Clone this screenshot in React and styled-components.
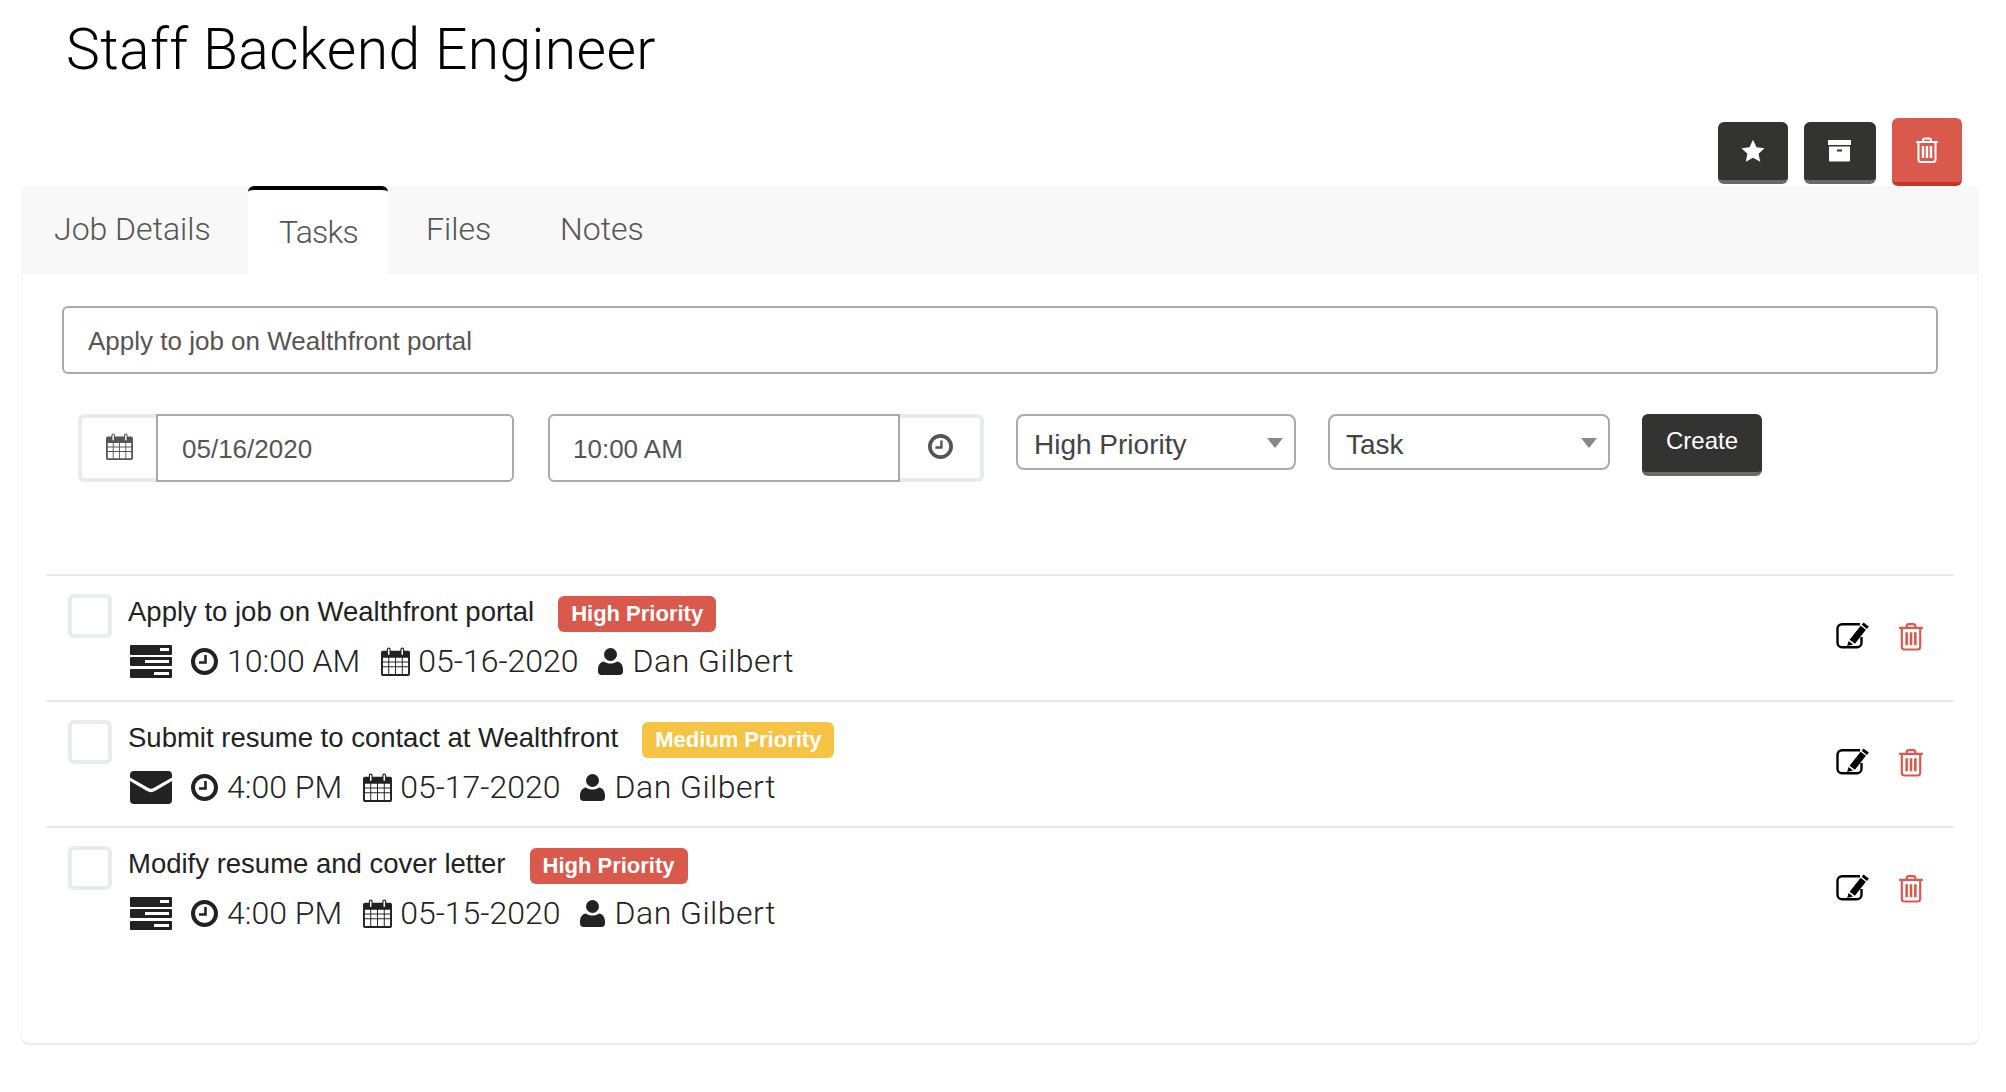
import React from "react";
import styled, { createGlobalStyle } from "styled-components";

const Global = createGlobalStyle`
  html, body { margin: 0; padding: 0; background: #fff; }
  body { font-family: "Liberation Sans", Arial, sans-serif; color: #222; }
`;
const LIGHT = `"Roboto", "Liberation Sans", sans-serif`;

const Page = styled.div`
  width: 2006px; height: 1092px; box-sizing: border-box; padding: 0 27px 0 21px; overflow: hidden;
`;
const Title = styled.h1`
  margin: 0 0 0 45px; height: 118px; font: 300 57px/100px ${LIGHT}; letter-spacing: 0.42px; color: #000; white-space: nowrap;
`;
const Actions = styled.div`
  display: flex; justify-content: flex-end; align-items: flex-start; gap: 16px; padding-right: 17px; height: 68px;
`;
const ActionBtn = styled.button`
  box-sizing: border-box; width: ${p => p.$w}px; height: ${p => p.$h}px; margin-top: ${p => p.$top}px;
  display: flex; align-items: center; justify-content: center; padding: 0; border: 0; border-radius: 6px;
  background: ${p => p.$bg}; border-bottom: 4px solid ${p => p.$edge}; color: #fff;
`;
const Card = styled.section`
  box-sizing: border-box; height: 859px; background: #fff; border-radius: 8px;
  border-left: 1px solid #f4f4f4; border-right: 1px solid #f4f4f4; border-bottom: 2px solid #eaeaea;
`;
const TabBar = styled.nav`
  display: flex; height: 88px; background: #f8f8f8; border-radius: 8px 8px 0 0;
`;
const Tab = styled.div`
  box-sizing: border-box; width: ${p => p.$w}px; padding-left: ${p => p.$pl}px; height: 88px;
  font: 300 32px/86px ${LIGHT}; color: #555;
  ${p => p.$active && `background: #fff; border-top: 4px solid #000; border-radius: 6px 6px 0 0; line-height: 84px; letter-spacing: -0.7px;`}
`;
const Panel = styled.div`
  padding: 32px 40px 0 40px;
`;
const WideInput = styled.input`
  display: block; box-sizing: border-box; width: 100%; height: 68px; padding: 2px 24px 0;
  border: 2px solid #aaa; border-radius: 6px; outline: 0; color: #555;
  font: 26px "Liberation Sans", sans-serif;
`;
const FormRow = styled.div`
  display: grid; grid-template-columns: 470px 468px 312px 314px 120px; align-items: start;
  margin: 40px 0 0 16px; height: 160px;
`;
const InputGroup = styled.div`
  display: flex; width: 436px; height: 68px;
`;
const Addon = styled.div`
  box-sizing: border-box; width: ${p => p.$w}px; flex: none; height: 68px;
  display: flex; align-items: center; justify-content: center; color: #555; background: #fff;
  border: 4px solid #e8ecef; border-${p => (p.$right ? "left" : "right")}: 0;
  border-radius: ${p => (p.$right ? "0 6px 6px 0" : "6px 0 0 6px")};
  padding-bottom: 4px;
`;
const GroupInput = styled.input`
  box-sizing: border-box; width: 100%; min-width: 0; height: 68px; padding: 3px ${p => (p.$right ? 23 : 24)}px 0;
  border: 2px solid #aaa; outline: 0; color: #555; font: 26px "Liberation Sans", sans-serif;
  border-radius: ${p => (p.$right ? "6px 0 0 6px" : "0 6px 6px 0")};
`;
const SelectWrap = styled.div`
  position: relative; width: ${p => p.$w}px; height: 56px;
  &::after {
    content: ""; position: absolute; right: 13px; top: 24px;
    border-left: 8px solid transparent; border-right: 8px solid transparent; border-top: 10px solid #888;
  }
`;
const Select = styled.select`
  appearance: none; box-sizing: border-box; width: 100%; height: 56px; padding: 5px 16px 0; background: #fff;
  border: 2px solid #aaa; border-radius: 8px; outline: 0; color: #444; font: 28px "Liberation Sans", sans-serif;
`;
const CreateBtn = styled.button`
  box-sizing: border-box; width: 120px; height: 62px; padding: 0 0 4px; border: 0;
  border-bottom: 4px solid #6a6a6a; border-radius: 6px; background: #333331; color: #fff;
  font: 24px "Liberation Sans", sans-serif;
`;
const List = styled.div`
  margin: 0 -16px 0 -16px;
`;
const Row = styled.div`
  box-sizing: border-box; display: flex; height: 126px; padding: 18px 0 0 22px;
  border-top: 2px solid #e8ebee;
`;
const Check = styled.div`
  box-sizing: border-box; width: 44px; height: 44px; flex: none; border: 4px solid #e8ecef; border-radius: 6px;
`;
const Body = styled.div`
  flex: 1; margin-left: 16px;
`;
const TitleLine = styled.div`
  display: flex; align-items: center; gap: 24px; height: 38px; margin-top: 1px;
  font-size: 27.5px; color: #222; white-space: nowrap;
`;
const TaskName = styled.span` position: relative; top: -2px; `;
const Badge = styled.span`
  box-sizing: border-box; height: 36px; padding: 0 13px; border-radius: 6px; background: ${p => p.$bg}; color: #fff;
  font: 700 22px/35px "Liberation Sans", sans-serif; white-space: nowrap;
`;
const Meta = styled.div`
  display: flex; align-items: center; height: 40px; margin-top: 8px; color: #222;
  font: 300 32px/40px ${LIGHT}; white-space: nowrap;
`;
const MetaIcon = styled.span`
  display: inline-flex; flex: none; margin-left: ${p => p.$ml}px; margin-right: ${p => p.$mr}px;
`;
const Person = styled.span` letter-spacing: 0.5px; `;
const RowActions = styled.div`
  display: flex; gap: 29px; align-items: flex-start; padding: 28px 30px 0 0;
`;

const Star = () => (
  <svg width="24" height="24" viewBox="0 0 24 24" fill="#fff"><path d="M12 .8l3.5 7.4 8 1-5.9 5.5 1.6 8L12 18.8l-7.2 3.9 1.6-8L.5 9.2l8-1z" /></svg>
);
const Box = () => (
  <svg width="24" height="22" viewBox="0 0 24 22" fill="#fff"><path fillRule="evenodd" d="M0 0h23v5H0zM1 6.5h21v14a1 1 0 01-1 1H2a1 1 0 01-1-1zM9 9.500v2h5v-2z" /></svg>
);
const Trash = ({ color = "#fff", w = 24, h = 26 }) => (
  <svg width={w} height={h} viewBox="0 0 24 26" fill="none" stroke={color}>
    <path strokeWidth="2" d="M1 5h22M8 5V3.500A2 2 0 0110 1.500h4a2 2 0 012 2V5M3.500 5v17.500a2.500 2.500 0 002.500 2.500h12a2.500 2.500 0 002.500-2.500V5" />
    <path strokeWidth="2.400" d="M8 9v12M12 9v12M16 9v12" />
  </svg>
);
const Calendar = ({ size = 29, color = "#222" }) => (
  <svg width={size} height={size} viewBox="0 0 30 30" fill="none">
    <path fill={color} d="M2 4h4V2.500a2 2 0 014 0V4h10V2.500a2 2 0 014 0V4h4a2 2 0 012 2v22a2 2 0 01-2 2H2a2 2 0 01-2-2V6a2 2 0 012-2z" />
    <path fill="#fff" d="M7.200 2.500a.8.8 0 011.600 0v5a.8.8 0 01-1.600 0zM21.200 2.500a.8.8 0 011.600 0v5a.8.8 0 01-1.600 0z" />
    <path fill="#fff" d="M2 11h5.500v4H2zM8.500 11h6v4h-6zM15.500 11h6v4h-6zM22.500 11H28v4h-5.500zM2 16h5.500v4H2zM8.500 16h6v4h-6zM15.500 16h6v4h-6zM22.500 16H28v4h-5.500zM2 21h5.500v7H2zM8.500 21h6v7h-6zM15.500 21h6v7h-6zM22.500 21H28v7h-5.500z" />
  </svg>
);
const Clock = ({ size = 27, color = "#222" }) => (
  <svg width={size} height={size} viewBox="0 0 27 27" fill="none" stroke={color}>
    <circle cx="13.500" cy="13.500" r="11.500" strokeWidth="4" />
    <path strokeWidth="2.600" d="M14.500 7v7.500H8" />
  </svg>
);
const User = () => (
  <svg width="25" height="27" viewBox="0 0 25 27" fill="#222"><circle cx="12.500" cy="6.500" r="6.500" /><path d="M6 13.500c2 1.500 4 2 6.500 2s4.500-.5 6.500-2c3.500.5 6 3.500 6 8v2c0 2-1.500 3.500-3.500 3.500h-18C1.500 27 0 25.500 0 23.500v-2c0-4.500 2.500-7.500 6-8z" /></svg>
);
const Server = () => (
  <svg width="42" height="33" viewBox="0 0 42 33" fill="#222">
    <path fillRule="evenodd" d="M1 0h40a1 1 0 011 1v8a1 1 0 01-1 1H1a1 1 0 01-1-1V1a1 1 0 011-1zM30 3v3h9V3z" />
    <path fillRule="evenodd" d="M1 12h40a1 1 0 011 1v7a1 1 0 01-1 1H1a1 1 0 01-1-1v-7a1 1 0 011-1zM15 15v3h24v-3z" />
    <path fillRule="evenodd" d="M1 24h40a1 1 0 011 1v7a1 1 0 01-1 1H1a1 1 0 01-1-1v-7a1 1 0 011-1zM24 27v3h15v-3z" />
  </svg>
);
const Mail = () => (
  <svg width="42" height="33" viewBox="0 0 42 33" fill="#222">
    <path d="M4 0h34a4 4 0 014 4v2.500L23.500 17a5 5 0 01-5 0L0 6.500V4a4 4 0 014-4z" />
    <path d="M0 10l17 10a8 8 0 008 0l17-10v19a4 4 0 01-4 4H4a4 4 0 01-4-4z" />
  </svg>
);
const Edit = () => (
  <svg width="33" height="27" viewBox="0 0 33 27" fill="none">
    <path stroke="#000" strokeWidth="2.400" d="M24 2.200H6a4.500 4.500 0 00-4.500 4.500v14A4.500 4.500 0 006 25.200h15a4.500 4.500 0 004.500-4.500V15" />
    <path fill="#000" d="M27.500.5l5.300 4.100-1.800 2.300-5.300-4.100zM24.600 3.700l5.300 4.100-11 14-5.300-4.100zM12.600 19l4.500 3.400-6 1.700z" />
  </svg>
);

const tasks = [
  { name: "Apply to job on Wealthfront portal", label: "High Priority", bg: "#d9594c", Icon: Server, time: "10:00 AM", date: "05-16-2020" },
  { name: "Submit resume to contact at Wealthfront", label: "Medium Priority", bg: "#f6c344", Icon: Mail, time: "4:00 PM", date: "05-17-2020" },
  { name: "Modify resume and cover letter", label: "High Priority", bg: "#d9594c", Icon: Server, time: "4:00 PM", date: "05-15-2020" },
];

export default function App() {
  return (
    <Page>
      <Global />
      <Title>Staff Backend Engineer</Title>
      <Actions>
        <ActionBtn $w={70} $h={62} $top={4} $bg="#333331" $edge="#6a6a6a"><Star /></ActionBtn>
        <ActionBtn $w={72} $h={62} $top={4} $bg="#333331" $edge="#6a6a6a"><Box /></ActionBtn>
        <ActionBtn $w={70} $h={68} $top={0} $bg="#d9594c" $edge="#cc3328"><Trash /></ActionBtn>
      </Actions>
      <Card>
        <TabBar>
          <Tab $w={226} $pl={32}>Job Details</Tab>
          <Tab $w={140} $pl={31} $active>Tasks</Tab>
          <Tab $w={172} $pl={38}>Files</Tab>
          <Tab $w={120} $pl={0}>Notes</Tab>
        </TabBar>
        <Panel>
          <WideInput readOnly value="Apply to job on Wealthfront portal" />
          <FormRow>
            <InputGroup>
              <Addon $w={78}><Calendar size={27} color="#555" /></Addon>
              <GroupInput readOnly value="05/16/2020" />
            </InputGroup>
            <InputGroup>
              <GroupInput $right readOnly value="10:00 AM" />
              <Addon $right $w={84}><Clock size={25} color="#555" /></Addon>
            </InputGroup>
            <SelectWrap $w={280}>
              <Select defaultValue="High Priority"><option>High Priority</option></Select>
            </SelectWrap>
            <SelectWrap $w={282}>
              <Select defaultValue="Task"><option>Task</option></Select>
            </SelectWrap>
            <CreateBtn>Create</CreateBtn>
          </FormRow>
          <List>
            {tasks.map(t => (
              <Row key={t.name}>
                <Check />
                <Body>
                  <TitleLine>
                    <TaskName>{t.name}</TaskName>
                    <Badge $bg={t.bg}>{t.label}</Badge>
                  </TitleLine>
                  <Meta>
                    <MetaIcon $ml={2} $mr={19}><t.Icon /></MetaIcon>
                    <MetaIcon $ml={0} $mr={9}><Clock /></MetaIcon>
                    {t.time}
                    <MetaIcon $ml={21} $mr={8}><Calendar /></MetaIcon>
                    {t.date}
                    <MetaIcon $ml={19} $mr={10}><User /></MetaIcon>
                    <Person>Dan Gilbert</Person>
                  </Meta>
                </Body>
                <RowActions>
                  <Edit />
                  <Trash color="#d9594c" w={26} h={29} />
                </RowActions>
              </Row>
            ))}
          </List>
        </Panel>
      </Card>
    </Page>
  );
}
